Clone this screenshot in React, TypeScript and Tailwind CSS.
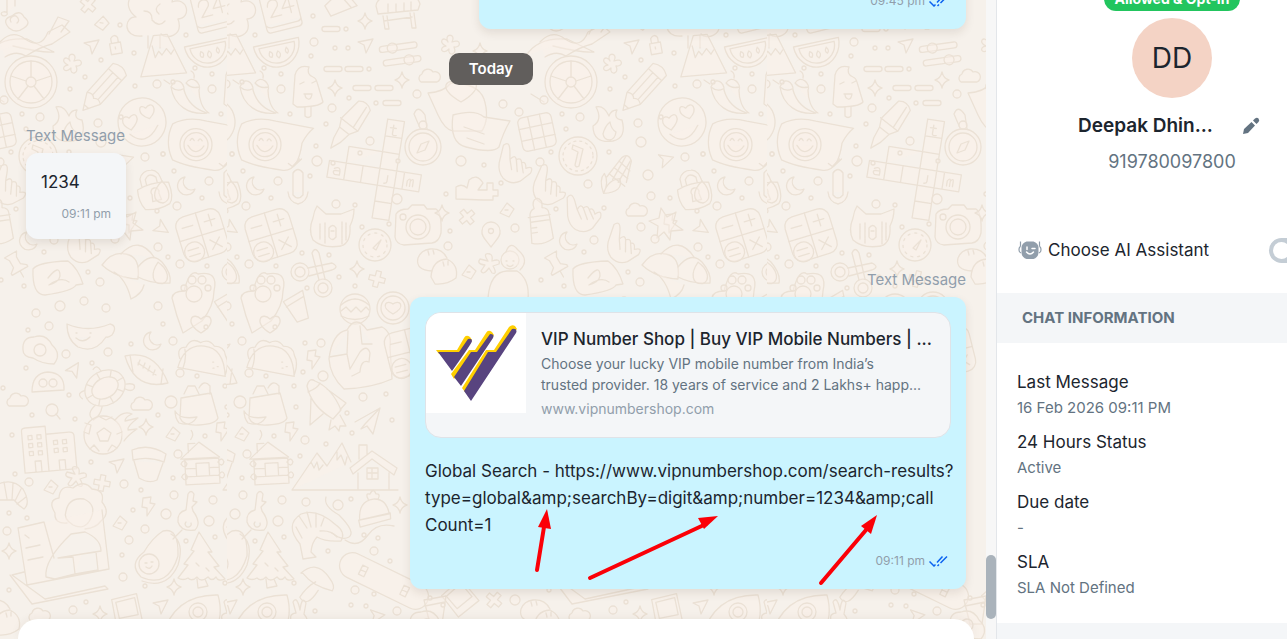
import React from "react";

type Kind = keyof typeof shapes;

const sparkle = "M0-8Q1.500-1.500 7 0Q1.500 1.500 0 8Q-1.500 1.500-7 0Q-1.500-1.500 0-8Z";

const shapes = {
  sparkle: <path d={sparkle} />,
  plus: <path d="M-2.500-8h5v5.500h5.500v5h-5.500v5.500h-5v-5.500H-8v-5h5.500z" />,
  cursor: <path d="M-7-3L8-6L1 8L-1 0Z" />,
  moon: <path d="M-1-9A9 9 0 1 0 9 3A8 8 0 0 1-1-9Z" />,
  bolt: <path d="M-5-8L3-9L2-3L7-2L-1 10L-1 2L-6 1Z" />,
  cloud: <path d="M-8 6A4.500 4.500 0 0 1-7-2A6 6 0 0 1 4-4A5 5 0 0 1 8 6Z" />,
  diamond: <path d="M0-7L7-1L2 7L-7 3Z M-2 0h3" />,
  heart: <path d="M0 8C-18-3-8-14 0-6C8-14 18-3 0 8Z" />,
  flower: (
    <path d="M-2-3C-7-12 7-12 2-3C11-7 12 3 4 2C8 11-3 11-1 4C-8 11-12 2-4 1C-13-3-6-10-2-3Z" />
  ),
  pill: <rect x="-9" y="-2.500" width="18" height="5" rx="2.500" />,
  drop: <path d="M0-11C9-2 9 9 1 11C-10 10-10-1 0-11Z" />,
  pin: (
    <>
      <path d="M0 12C-5 5-10 1-9-4A9 9 0 0 1 9-4C10 1 5 5 0 12Z" />
      <circle cy="-4" r="2.500" />
    </>
  ),
  calendar: (
    <>
      <path d="M-18-22H18V14Q18 18 14 18H-14Q-18 18-18 14Z M-18 10Q-16 13-13 13H14Q17 13 18 10" />
      <path d="M-12-8Q-11-14-6-14Q0-13-2-7L-11 3H0M10 3V-14L2-3H14" />
    </>
  ),
  melon: (
    <>
      <path d="M-23-10H23A23 25 0 0 1-23-10ZM-18-7H18A18 18 0 0 1-18-7Z" />
      <path d="M-8-2q4 2 1 6q-4-1-1-6M0-1q4 3 0 7q-4-3 0-7M9-3q3 4 0 6q-3-2 0-6" />
    </>
  ),
  peak: <path d="M-23 20L-7-20H7L23 20ZM-9-10L-7 2L-3-4L0 0L5-6L9 0L12-4" />,
  tree: (
    <>
      <path d="M-12 20C-32 22-30 0-18 1C-35-12-20-30-8-20C0-36 22-28 18-14C34-20 38 2 24 3C30 20 12 24 7 18" />
      <path d="M-10-5q8 0 8 8M6-12q-7 5-1 10M-6 20v12M6 20v12M-2 4q7 8 13 1" />
    </>
  ),
  chilli: (
    <path d="M-18-10C-14-22-4-14-5-7C-2 4 5 12 18 16C0 18-15 9-18-10M-3-14C3-23 13-13 10-7C10 2 13 12 20 16M-18-10q6 5 12 2M-3-14q5 6 13 4M5-19q1-5-3-7M-19-13l-6-4" />
  ),
  bubbleFace: (
    <>
      <path d="M-34-20Q-20-28 0-24L38-18Q32-13 27-3Q24 26 9 25Q-20 22-33 16Q-42-2-34-20Z" />
      <circle cx="-10" r="16" />
      <circle cx="-10" r="12" />
      <path d="M-18 1q8 12 16 0M-16-4q2-4 4 0M-8-4q2-4 4 0M14 18l4 3l7-8M20 20l7-7" />
    </>
  ),
  popsicle: (
    <>
      <path d="M-14 17L-12-12Q-9-23 2-20Q-1-13 6-10Q9-9 10-5L16 15Q12 20-10 20Z" />
      <path d="M-2 20v9q3 3 6 0v-9M-7-3l4-2M5-4l4-2M-3 7h8q-1 6-4 5t-3-5" />
    </>
  ),
  bench: (
    <path d="M-22-10Q-21-18-12-19L13-21Q20-19 22-12L20-6L-20-2ZM-15 0l2 13h4l-2-13M12-3l2 15h4l-2-15M-14 5l28-4M-10-12v8M-2-12v8M6-13v8M13-14v8" />
  ),
  pens: (
    <>
      <rect x="-20" y="-9" width="38" height="6" rx="3" />
      <rect x="-18" y="5" width="38" height="6" rx="3" />
      <circle cx="-7" cy="-6" r="5" />
      <circle cx="8" cy="8" r="5" />
    </>
  ),
  marker: (
    <path d="M-7-26Q0-32 8-26L11-2L6 6H-6L-10-2ZM-6 6L-4 18L0 28L4 18L6 6M-11-2H11M3-26L5-3" />
  ),
  crossword: (
    <>
      <path d="M9-50h17v100H9zM9-33h17M9-17h17M9 17h17M9 33h17M-42 0h93v17h-93zM-25 0v-17h34M-25 17V0M-8 17v-17M34 0v17" />
      <path d="M16-45v9q0 2 4 1M13-42h6M18 6v6q0 2-3 2M-36 7q6-3 6 2v4h-5q-3-3 0-4h5M38 13v-5q3-4 3 0v5v-5q3-4 3 0v5" />
    </>
  ),
  mic: <path d="M-5-14q5-7 10 0V8Q0 14-5 8ZM-10 5Q-9 15 0 17Q9 15 10 5" />,
  calculator: (
    <>
      <rect x="-23" y="-23" width="46" height="46" rx="10" />
      <path d="M0-23V23M-23 0H23M-17-12h11M6-12h11M12-18v12M6 7l10 10M16 7L6 17" />
      <circle cx="-12" cy="14" r="10" />
      <path d="M-18 11h11M-18 17h11" />
    </>
  ),
  cat: (
    <>
      <path d="M-19-10Q-18-17-15-22L-6-14H9L22-19Q22-10 18-2Q19 15 9 18Q-9 21-19 12Q-24 2-19-10Z" />
      <path d="M-12-4v15M-7-5v20M10-6v22M14-5v17M-3 0q4-5 7 0v9q-4 5-7 0ZM-1 3h3" />
    </>
  ),
  stopwatch: (
    <>
      <circle r="16" />
      <circle r="12" strokeDasharray="2 5" />
      <path d="M-2 3L6-5L1 5Z" />
    </>
  ),
  scissors: (
    <>
      <circle cx="-12" cy="-3" r="9" />
      <circle cx="-12" cy="-3" r="5" />
      <circle cx="11" cy="13" r="9" />
      <circle cx="11" cy="13" r="5" />
      <path d="M-4-7L20-12Q28-8 20-5L-3 1M7 5L0-22Q3-29 7-22L13 4" />
    </>
  ),
  paw: (
    <>
      <path d="M-11 32Q-18 14-22-3Q-21-10-10-10Q-4-33 4-27Q25-31 20-10Q20 5 8 20Q0 25-11 32Z" />
      <circle cy="-7" r="8" />
      <circle cx="-10" cy="-13" r="3" />
      <circle cx="-2" cy="-21" r="4" />
      <circle cx="8" cy="-21" r="4" />
      <circle cx="14" cy="-13" r="3" />
    </>
  ),
  cup: <path d="M-12-10L10-14L6 14H-6ZM-11-4L9-8" />,
  burger: (
    <>
      <circle r="15" />
      <path d="M-14-4Q0-16 14-4M-14 2l5-4l5 5l5-5l5 5l5-5l3 3M-14 7Q0 14 14 7" />
    </>
  ),
  badge: (
    <>
      <circle r="16" />
      <circle r="12" />
      <path d="M0 6C-14-2-6-9 0-4C6-9 14-2 0 6Z" />
    </>
  ),
  camera: (
    <>
      <path d="M-22-13Q-19-18-10-18L-6-22H6L9-18H18Q24-14 23 6Q21 15 14 16L-14 18Q-22 17-23 10Z" />
      <circle r="12" />
      <circle r="8" />
      <circle cx="-15" cy="-10" r="3" />
    </>
  ),
  compass: (
    <>
      <circle r="18" />
      <circle r="14" />
      <path d="M-6 6L-2-3L6-6L2 3ZM-3-19L-9-33Q-5-43 2-32L4-18" />
      <circle cx="0" cy="-22" r="4" />
    </>
  ),
  heartBubble: (
    <>
      <path d="M-30-12Q-14-13-7-22Q20-22 26-6Q32 13 24 26H-5Q-13 25-20 10Z" />
      <path d="M3-3C-24-18-9-29 2-21C16-31 30-18 3-3Z" />
    </>
  ),
  textBubble: (
    <path d="M-27-18Q-5-24 4-16L30-12Q23 0 19 14Q13 21-14 14Q-31 10-27-18ZM-16-6l20 7M-13 5l17 6" />
  ),
  chocolate: (
    <>
      <rect x="-17" y="-17" width="34" height="34" rx="5" />
      <path d="M-6-17V17M6-17V17M-17-6H17M-17 6H17" />
    </>
  ),
  flame: (
    <path d="M-13-17Q-5-19 0-8Q2-14 8-14Q4-5 13-4Q18 14 4 17Q-16 20-16 2Q-6-4-13-17ZM-6 10Q-4 2 1-2Q2 5 7 8Q6 15 1 16Q-5 16-6 10" />
  ),
  clock: (
    <>
      <circle r="19" />
      <circle r="15" strokeDasharray="2 4" />
      <path d="M-5-11L5-7L1 10Q-2 12-3 9L0-4L-6-7Z" />
    </>
  ),
  corn: (
    <>
      <path d="M-10 18Q-17 5-12-2Q-6 6-10 18Q-8 4 4 1Q10 14-10 18M-9 1L3-20Q9-26 13-18L11 4" />
      <path d="M-7-2L10 8M-3-9L12 0M1-16L13-8M7-22L-3 3M12-18L3 5" />
    </>
  ),
  hand: (
    <path d="M-14 5L-16-13Q-12-20-8-10L-5-2Q-2-9 1-4Q5-8 7-3Q11-6 13 1Q20-5 19 4L12 15Q5 22-5 18Q-12 14-14 5M-5-2L0 7M1-4L6 7M7-3L12 6" />
  ),
  heartFace: (
    <>
      <circle r="24" />
      <path d="M-12 6C-24-2-18-12-12-6C-6-13 2-5-12 6ZM8-2C-5-9 0-20 6-13C13-20 19-10 8-2ZM-14 10Q0 26 15 6" />
    </>
  ),
  pencil: (
    <path d="M-9-25Q0-31 9-25V14L0 30L-9 14ZM-9-18H9M-9 14Q-4 10 0 14Q4 10 9 14M-3-18V12M4-18V12M-3 25H3" />
  ),
  wheel: (
    <>
      <circle r="26" />
      <circle r="21" />
      <circle r="5" />
      <path d="M0-5V-21M5-1L20-6M3 4L13 17M-3 4L-13 17M-5-1L-20-6" />
      <path d="M-45-26Q-34-45-4-43L23-30Q10-29-18-36M-40 12L-27 20" />
      <circle cx="-27" cy="18" r="4" />
    </>
  ),
  dumbbell: (
    <path d="M-19 10V-1Q-13-5-8 0L-6-8Q2-15 8-5L3 2H12V-5H18V2H23V8H18V12H8L-19 11Z" />
  ),
  bottle: (
    <path d="M-11 20L-9-8Q-8-13-4-14Q-6-22 0-24Q6-22 4-14Q10-13 10-8L11 18Q0 24-11 20ZM-11-6H11M-9-1H10M-9 5h5M-9 10h5" />
  ),
  buns: (
    <>
      <path d="M-5 4Q-22 3-19-9Q-16-17-7-18Q5-19 10-9" />
      <path d="M-6 10Q-5-7 10-8Q22-2 19 11Q10 18-2 17ZM6-5l1 4M11-6v4M-9-16l1 4M-4-17l1 4" />
    </>
  ),
  person: (
    <>
      <circle cy="-10" r="9" />
      <path d="M-4-18Q0-30 8-20Q20-10 10 0M-22 28Q-20 2-3 1H7Q20 9 18 30M-4-9h1M3-9h1M-3-5q3 3 6 0" />
    </>
  ),
  pushpin: <path d="M-7-11H7L4-6V2L9 6V8H-9V6L-4 2V-6ZM0 8V15" />,
  noteBubble: (
    <path d="M-24-9Q-19-16 11-17Q21-10 26 6L19 7Q16 13-12 17Q-25 17-24-9ZM-9 0Q3-15 3-2Q2 4-8 7Q4-2 12 4" />
  ),
  hats: (
    <>
      <path d="M-34-2Q-24-16-10-13Q5-10 2 12Q-20 11-34-2Z" />
      <path d="M-15-13Q3-32 18-10M2 0Q15-16 26-5Q36 7 34 16Q15 17 2 10M-22 5Q-10 12-5 32Q6 27 8 18" />
    </>
  ),
  smallLock: <path d="M-5-3H6V8H-5ZM-3-3V-8Q1-13 4-8V-3M0 1v2" />,
  lock: (
    <>
      <path d="M-16-4Q0-9 16-4Q18 12 12 17Q0 21-13 17Q-18 8-16-4ZM-11-6V-14Q-7-22 2-20Q9-19 10-6M-6-7V-12Q-1-19 5-12V-7" />
      <path d="M-3 4A4 4 0 1 1 4 4L5 11H-4Z" />
    </>
  ),
  mug: (
    <path d="M-21-12Q0-3 22-12Q30-10 24-1Q20 2 18 1Q7 18-10 11Q-21 4-21-12ZM-12 2q7 6 14-1M-12-3h1M2-3h1" />
  ),
  egg: (
    <>
      <path d="M-17 0Q-18-13-6-13Q6-17 12-5Q22 4 14 14Q2 14-7 8Q-17 7-17 0Z" />
      <circle r="6" />
    </>
  ),
  football: (
    <path d="M-22-13Q8-20 21 14Q-12 22-22-13ZM-17-14L-14 3M16 0L14 15M-9-6L9 6M-7-9l-2 5M-2-6l-2 5M3-3L1 2M8 1L6 6" />
  ),
  turtle: (
    <>
      <ellipse rx="21" ry="17" />
      <ellipse rx="14" ry="10" />
      <path d="M-14 0L-21 0M14 0L21 0M0-10V-17M0 10V17M-10-7L-14-12M10-7L14-12M-10 7L-14 12M10 7L14 12M-19-8q-9-2-6 6M-17 10q-13 3-9 12q8 0 14-7M5-17q0-8-6-5M20 7q10 4 5 8q-4 2-8-4" />
    </>
  ),
  eyes: (
    <>
      <path d="M-16 9Q-16-10 0-11Q17-10 16 7Z" />
      <circle cx="-5" r="4" />
      <circle cx="5" r="4" />
    </>
  ),
  magnifier: (
    <>
      <circle r="6" />
      <path d="M4 4L8 9" />
    </>
  ),
  taco: (
    <path d="M-24 12Q-20-12 0-12Q20-12 24 16ZM-23 3Q-28-8-18-9Q-14-20-4-15Q4-20 10-13Q20-14 22-5Q27 2 24 14M-19 13Q-16 2-19-7M10 3h1M15 7h1M11 9h1" />
  ),
  daypack: (
    <path d="M-18-8L12-13L19 12Q17 18 0 19Q-16 20-19 12ZM-15-12L-11-20H-4L0-12M0-18Q5-27 11-20V-12M-24 5Q-19 14-2 11Q-8 21-20 17Q-24 12-24 5" />
  ),
  rocket: (
    <>
      <path d="M-9-24Q-15-28-17-19Q-13 1 9 14L17 5Q8-17-9-24ZM-13-7L-14 20L-1 9M3-16L22-2L16 5M7 15l-2 10l6-4l4 5l1-5l6 0l-6-11" />
      <path d="M-16-13Q-6-17-4-22" />
    </>
  ),
  plane: <path d="M-13 2L12-12L5 14L-1 6L-7 9L-3 4L12-12" />,
  soccer: (
    <>
      <circle r="19" />
      <path d="M-6-2L1-7L8-2L5 6H-3ZM-19-3l5 2l2-9l-6-2M-3-18l6 3l6-3M19-3l-5 2M14 13l-5-3l-4 6M-13 14l4-4l5 6M12-15Q20-25 29-21Q22-18 22-14L35-17Q24-9 25-5L34-6Q25 0 21 6" />
    </>
  ),
  buildings: (
    <>
      <path d="M-26 23V-19Q-26-22-22-22H-2V23ZM-2-14H21Q26-14 26-10V23H-2M-15 23V12H-9V23M9 23V13H15V23" />
      <path d="M-20-14h4v4h-4zM-11-14h4v4h-4zM-20-6h4v4h-4zM-11-6h4v4h-4zM-20 2h4v4h-4zM-11 2h4v4h-4zM5-7h4v4H5zM14-7h4v4h-4zM5 1h4v4H5zM14 1h4v4h-4z" />
    </>
  ),
  pot: <path d="M-17-13Q0-20 17-9L15-1Q0-7-16-3ZM-15-2L-10 15Q0 21 8 17L14 0" />,
  cabin: (
    <path d="M-21-6L-2-22L18-6ZM-17-5H17V20H-17ZM-6-1H7V12H-6ZM-17 4H-6M-17 12H-6M7 4H17M7 12H17M-13-12V-21H-6M-10-25q4-5 1-9M-21-1q3-6 6 0q-2 6-6 0M16-1q4-6 6 0q-2 6-6 0M-21 12q3-6 6 0q-2 6-6 0M16 12q4-6 6 0q-2 6-6 0" />
  ),
  range: (
    <path d="M-53 23L-28-14L-18-1L-3-24L6-5M-53 23H53M-34-5l3 6l3-6l2 8l4-5M-8-15l0 8l4-5l4 10l2-8M5 1L27-16L52 1L49 8L27-8L8 7ZM13 6V22M44 6V22M22 1h11v11H22zM22 6h11M27 1v11M14-8V-22H22V-12" />
  ),
  flower5: <path d="M-1-3Q-7-12 1-10Q4-9 3-3Q12-6 10 0L4 2Q9 11 3 9L0 4Q-6 12-8 7L-4 1Q-13 0-9-5Z" />,
  croissant: (
    <path d="M-16-12Q0-20 11-8Q19 6 12 12Q7 9 2 3H-13M-8-15L-5 2M1-14L0 3M9-8L3 4M14 0L5 7" />
  ),
  desk: (
    <>
      <path d="M-9-43Q-22-42-21-53Q-29-66-17-68Q-16-82-3-78Q8-87 16-77Q29-76 26-64Q35-53 25-45Q20-38 9-37M-10-55Q-7-69 8-67Q21-61 15-48Q9-35-3-41Q-13-47-10-55Z" />
      <path d="M-58-38L-32-44M-58-38L-49 19L33 3L26-56M-32-44L-22-8M-66 9L-44 38L32 23L29 20L-31 33L-64 9L-52 6M-30 11Q-32-6-5-32L9-34Q25-27 25-15L6-12L-18-8L-3-9L-1 8L-21 13ZM6-12L20-14L22 4L-1 8M-50-18l14-3M-48-6l15-3M-51-31l4 3" />
    </>
  ),
  key: <path d="M-10 3Q-11-7-2-9L0-25Q3-30 6-25L5-18L9-17L4-12L5-8Q14 4 7 11Q-7 13-10 3ZM-2 3a3 3 0 1 0 5 1M-6 11L-15 20" />,
  avocado: (
    <>
      <path d="M9-25Q25-29 24 0Q14 33-13 21Q-26 8-10-4Q-2-18 9-25ZM17-22Q31-14 24 9Q13 34-12 25" />
      <circle cx="-5" cy="8" r="10" />
      <path d="M-9 7h2M-3 6h2M-8 11q4 3 6-1" />
    </>
  ),
  pine: (
    <path d="M-2-28L11-8H7L18 6L13 7L24 19Q17 22 15 17Q11 22 7 17Q0 23-4 17Q-9 22-13 18Q-18 21-23 18L-13 5L-17 4L-7-9L-10-10ZM-4 19L-3 28L7 26L4 19M-5 3l3 3M5 8l3 3" />
  ),
  shrimp: (
    <path d="M25 9Q9 10 1 5Q-4 10-5 20L0 25L-13 27L-16 12Q-32-7-15-18Q1-24 20-7Q30 0 25 9ZM-14 6L-20-5M-9-4L-17-16M-5-5L-9-20M0-5V-19M5-6L8-14M4-1Q15-2 21 5" />
  ),
  beanie: <path d="M-15 9Q-15-10 0-11Q13-11 15 5ZM-16 9L16 4V10L-15 16ZM-5-11q-3-7 2-5q4-7 6 0q5 0 2 5" />,
  worm: <path d="M-33-30Q-36-21-20-12Q-3 5-10 10Q-17 14-27 6M-14 13Q-1 22 9 8Q18-5 35-1" fill="none" />,
  skateboard: (
    <>
      <rect x="-48" y="-13" width="96" height="26" rx="13" />
      <path d="M-26-5h6v10h-6zM20-5h6v10h-6zM-26 0h6M20 0h6" />
    </>
  ),
  mushroom: <path d="M-17-4Q-4-20 11-5Q20 3 17 8Q-3 7-15-4ZM-1 2Q-9 8-14 20Q-5 30 3 10" />,
  capsule: (
    <>
      <path d="M-32 23Q-20-20 24-19Q30 2 20 19L-10 27M-32 23l8-10l-6-2" />
      <circle cx="4" cy="-2" r="9" />
      <circle cx="4" cy="-2" r="5" />
    </>
  ),
  bunny: <path d="M-7 10Q-13 0-4-1L-7-12Q-3-19 0-4Q2-19 6-11L4 0Q10 7 6 14" />,
  monitor: <path d="M-15-9L10-14L15 14L-11 18ZM-11-6L8-10L11 7L-8 10Z" />,
  satchel: (
    <path d="M-23 5Q-20-21-5-24Q4-40 15-24L30-27Q40-22 38-7L40 25Q20 34-8 35Q-22 22-23 5ZM-23 3L-5 0L-4-23M-5 0L-2 15L8-2Q15-10 18-1L17 8Q9 5 8 18L0 22M8-28L10-10H20" />
  ),
  burst: <path d="M-10 12L-9 0L-18-5L-8-8L-6-18L0-9L9-14L6-3L16 4L4 5L3 14L-3 6Z" />,
  music: <path d="M-2 5V-9L6-11V-2M-2 5a3 2 0 1 1-4-1a3 2 0 0 1 4 1" />,
  landscape: (
    <path d="M-40 10Q-28-3-15 7Q1 18 8 0L22-7L30 0L12 12Q0 15-14 24Q-24 18-35 25M-31-4q-8-9 3-12q8-7 12 1q8 6 0 11q-8 6-15 0M-29-10a4 4 0 1 1 6 1M9 2l9-17l11 4l-8 11" />
  ),
};

const doodles: [Kind, number, number, number?][] = [
  ["calendar", 281, 12, -14], ["melon", 278, 52, -12], ["peak", 231, 55, -5], ["tree", 694, 16],
  ["chilli", 258, 97], ["bubbleFace", 275, 145, 2], ["popsicle", 307, 87], ["bench", 398, 16],
  ["pens", 400, 53, -8], ["marker", 348, 126, 38], ["crossword", 371, 167, 9], ["cup", 340, 4, 60],
  ["moon", 255, 186], ["lock", 694, 190, -14], ["drop", 231, 192], ["mic", 298, 187], ["calculator", 271, 235, -17],
  ["cat", 332, 228], ["stopwatch", 375, 245], ["scissors", 312, 275], ["sparkle", 357, 269], ["plus", 377, 279, 15],
  ["drop", 229, 273, -10], ["paw", 263, 301], ["cup", 298, 307, -20], ["burger", 355, 309], ["badge", 393, 308],
  ["camera", 418, 227], ["compass", 423, 147], ["heartBubble", 458, 105], ["textBubble", 480, 133],
  ["chocolate", 537, 132, -12], ["flame", 609, 124], ["clock", 578, 156], ["corn", 616, 177, 8],
  ["hand", 514, 163, 20], ["hand", 549, 185, 30], ["hand", 582, 212, 5], ["hand", 623, 243, 25],
  ["heartFace", 682, 122, -10], ["pencil", 643, 88, 42], ["wheel", 571, 82], ["landscape", 580, 32],
  ["dumbbell", 475, 188], ["plus", 467, 217, 50], ["bottle", 540, 222, -8], ["pin", 491, 235], ["moon", 568, 241],
  ["buns", 437, 267], ["sparkle", 442, 213], ["person", 510, 270], ["pushpin", 556, 264, -30], ["noteBubble", 597, 278],
  ["hats", 676, 267], ["cloud", 636, 210], ["bolt", 670, 223], ["cursor", 700, 227, 70], ["cursor", 664, 160, 20],
  ["flower", 612, 64], ["smallLock", 655, 46, -10], ["cursor", 631, 46], ["music", 549, 8], ["plus", 628, 5, 40],
  ["diamond", 642, 23, 10], ["sparkle", 365, 21], ["sparkle", 335, 88], ["sparkle", 402, 80], ["cursor", 365, 45],
  ["pill", 331, 29], ["pill", 333, 69], ["pill", 354, 69], ["pill", 362, 88], ["pill", 384, 88], ["pill", 392, 103],
  ["cloud", 429, 76], ["sparkle", 480, 51], ["flower", 450, 45], ["burst", 667, 226], ["diamond", 507, 210],
  ["sparkle", 400, 505], ["flower5", 489, 264], ["diamond", 469, 272], ["satchel", 352, 354], ["calculator", 410, 352, -14],
  ["mug", 628, 336], ["egg", 580, 350], ["cursor", 613, 371, -20], ["moon", 692, 341], ["football", 687, 369],
  ["turtle", 645, 388, -30], ["eyes", 588, 383], ["cloud", 557, 400], ["cloud", 681, 404], ["magnifier", 592, 410],
  ["taco", 272, 358, 6], ["bolt", 313, 359], ["daypack", 268, 406], ["rocket", 324, 405], ["plane", 368, 420],
  ["sparkle", 686, 427], ["soccer", 643, 435], ["buildings", 589, 448, -5], ["pot", 689, 463], ["cabin", 271, 464, -3],
  ["diamond", 242, 434], ["bolt", 291, 431], ["range", 345, 467], ["cursor", 656, 465], ["flower5", 616, 477],
  ["plus", 642, 483, 10], ["diamond", 591, 487], ["croissant", 552, 497], ["desk", 616, 566], ["key", 257, 519],
  ["avocado", 694, 556], ["pine", 270, 560], ["shrimp", 316, 532], ["beanie", 374, 510, -4], ["worm", 359, 527],
  ["sparkle", 549, 551], ["skateboard", 384, 581, 26], ["mushroom", 317, 580, 10], ["capsule", 263, 614],
  ["bunny", 300, 614], ["monitor", 667, 608, -2], ["bolt", 688, 506], ["sparkle", 243, 587], ["sparkle", 640, 614],
  ["diamond", 660, 523], ["cursor", 229, 606], ["monitor", 459, 596, -30], ["plus", 494, 600, 40], ["cup", 436, 610],
  ["buns", 540, 618], ["cloud", 579, 615], ["egg", 427, 625], ["heart", 270, 325], ["cursor", 375, 616, 30],
];

const dots: [number, number, number][] = [
  [660, 25, 2], [674, 53, 2], [641, 60, 2], [625, 77, 2], [610, 89, 2], [675, 86, 2], [697, 84, 4], [242, 82, 2],
  [255, 35, 2], [314, 42, 4], [311, 56, 2], [264, 68, 2], [281, 74, 2], [281, 89, 4], [313, 16, 2], [346, 29, 2],
  [335, 48, 2], [348, 48, 2], [369, 69, 2], [349, 98, 2], [376, 103, 2], [332, 108, 4], [290, 114, 2], [326, 124, 2],
  [417, 94, 4], [503, 104, 4], [519, 112, 4], [562, 114, 2], [580, 117, 4], [638, 123, 4], [661, 117, 2], [566, 129, 2],
  [370, 141, 4], [316, 146, 2], [317, 161, 5], [333, 163, 2], [360, 153, 2], [398, 161, 2], [232, 154, 2], [310, 176, 2],
  [461, 161, 5], [484, 165, 2], [540, 162, 4], [551, 152, 2], [609, 152, 2], [641, 142, 5], [685, 157, 4], [703, 154, 2],
  [648, 175, 5], [588, 184, 4], [501, 183, 2], [446, 194, 2], [278, 181, 4], [243, 171, 2], [271, 198, 2], [246, 206, 4],
  [336, 204, 4], [355, 205, 2], [397, 199, 5], [651, 196, 4], [670, 198, 2], [697, 211, 2], [362, 227, 2], [389, 224, 2],
  [604, 208, 2], [556, 209, 2], [515, 228, 4], [450, 231, 2], [448, 246, 4], [594, 240, 4], [584, 252, 2], [641, 227, 4],
  [655, 239, 4], [698, 247, 4], [237, 257, 2], [249, 264, 4], [302, 253, 2], [329, 255, 2], [339, 277, 2], [276, 266, 2],
  [307, 288, 2], [355, 286, 2], [640, 282, 4], [628, 272, 2], [624, 301, 4], [600, 306, 5], [646, 308, 4], [576, 313, 4],
  [541, 280, 2], [564, 286, 2], [698, 306, 4], [589, 326, 4], [568, 330, 2], [703, 324, 2], [242, 341, 4], [275, 327, 2],
  [305, 343, 2], [321, 343, 4], [606, 354, 4], [566, 368, 2], [648, 352, 4], [632, 363, 2], [671, 344, 2], [323, 376, 5],
  [303, 372, 2], [249, 373, 4], [266, 376, 2], [543, 388, 2], [609, 395, 2], [294, 386, 2], [240, 402, 6], [363, 397, 4],
  [386, 394, 2], [296, 407, 2], [347, 413, 2], [392, 420, 2], [572, 415, 2], [615, 419, 2], [698, 415, 2], [352, 433, 2],
  [552, 435, 2], [274, 436, 2], [305, 440, 4], [326, 444, 2], [247, 454, 4], [300, 456, 2], [555, 474, 2], [631, 462, 2],
  [569, 482, 4], [664, 484, 4], [681, 490, 2], [242, 478, 2], [243, 495, 4], [282, 500, 4], [306, 502, 4], [338, 505, 5],
  [351, 499, 2], [549, 513, 2], [567, 518, 2], [673, 510, 2], [235, 514, 5], [278, 521, 5], [547, 531, 4], [685, 529, 4],
  [669, 540, 4], [364, 535, 2], [378, 538, 2], [255, 541, 2], [284, 537, 2], [662, 555, 2], [328, 551, 2], [374, 551, 4],
  [390, 561, 2], [663, 577, 4], [685, 586, 2], [549, 590, 2], [613, 610, 4], [626, 602, 2], [294, 583, 2], [355, 590, 4],
  [374, 594, 2], [351, 605, 2], [366, 606, 2], [397, 611, 4], [315, 611, 2], [515, 600, 5], [430, 598, 2], [443, 605, 2],
];

function Wallpaper() {
  return (
    <svg aria-hidden="true" className="absolute inset-0 h-full w-full bg-[#f6f1eb]">
      <defs>
        <g id="motif">
          {doodles.map(([kind, x, y, turn = 0], i) => (
            <g key={i} transform={`translate(${x} ${y}) rotate(${turn})`}>
              {shapes[kind]}
            </g>
          ))}
          {dots.map(([x, y, r], i) => (
            <circle key={i} cx={x} cy={y} r={r} />
          ))}
        </g>
        <pattern id="doodles" x="227" y="0" width="540" height="960" patternUnits="userSpaceOnUse">
          <g
            transform="translate(-227 0)"
            fill="#f9efe9"
            fillOpacity="0.400"
            stroke="#ebe1d5"
            strokeWidth="1.300"
            strokeLinejoin="round"
            strokeLinecap="round"
          >
            <use href="#motif" x="-471" />
            <use href="#motif" />
            <use href="#motif" x="471" />
          </g>
        </pattern>
      </defs>
      <rect width="100%" height="100%" fill="url(#doodles)" />
    </svg>
  );
}

function Stamp({ time, read = false }: { time: string; read?: boolean }) {
  return (
    <p className="flex items-center justify-end gap-1 text-[12px] leading-5 text-[#919eab]">
      {time}
      {read && (
        <svg role="img" aria-label="Read" viewBox="0 0 22 12" className="h-3 w-[22px]" fill="none" stroke="#0b62f0" strokeWidth="1.500">
          <path d="M0.500 6.500L5 11L6.500 9.500M8 7.500L13.500 1.500M8.500 11L10 9.500M11.500 8L18 1.500" />
        </svg>
      )}
    </p>
  );
}

function Arrow({ d, head }: { d: string; head: string }) {
  return (
    <>
      <path d={d} stroke="#fb0007" strokeWidth="4" strokeLinecap="round" />
      <path d={head} fill="#fb0007" />
    </>
  );
}

function LinkPreview() {
  return (
    <a href="#preview" className="flex overflow-hidden rounded-2xl border border-[#dfe3e8] bg-[#f4f6f8]">
      <span className="h-[100px] w-[100px] shrink-0 bg-white">
        <svg role="img" aria-label="VIP Number Shop" viewBox="0 0 100 100" className="h-full w-full">
          <g fill="#ffcf00">
            <path d="M10 37H31L38 25Q40 21 44 24L46 27L33 41H13Z" />
            <path d="M25 61L43 37H49L60 20Q62 16 66 19L68 22L50 42L28 66Z" />
            <path d="M36 75L60 37H68L83 14Q86 11 89 13L91 16L70 42L39 79Z" />
          </g>
          <g fill="#58447f">
            <path d="M12 39H33L42 26Q46 25 46 28Q46 30 26 58Z" />
            <path d="M28 64L45 39H51L64 21Q69 21 67 25L35 73Z" />
            <path d="M38 78L62 39H70L86 16Q92 15 90 20L45 88Z" />
          </g>
        </svg>
      </span>
      <span className="block min-w-0 flex-1 px-[15px] pt-3 pb-[18px]">
        <strong className="block text-[17px] leading-7 font-medium whitespace-nowrap text-[#1c252e]">
          VIP Number Shop | Buy VIP Mobile Numbers | ...
        </strong>
        <span className="block text-[14px] leading-[21px] whitespace-nowrap text-[#637381]">
          Choose your lucky VIP mobile number from India’s
          <br />
          trusted provider. 18 years of service and 2 Lakhs+ happ...
        </span>
        <span className="mt-1 block text-[14px] leading-5 text-[#919eab]">www.vipnumbershop.com</span>
      </span>
    </a>
  );
}

function Chat() {
  return (
    <main className="relative flex min-w-0 flex-1 flex-col">
      <Wallpaper />
      <section aria-label="Messages" className="relative flex min-h-0 flex-1 flex-col justify-end overflow-hidden pr-5 pb-[30px] pl-4">
        <article className="w-[487px] shrink-0 self-end rounded-xl bg-[#caf4ff] px-[15px] pt-10 pb-[18px] shadow-[0_4px_10px_rgba(60,40,20,0.1)]">
          <Stamp time="09:45 pm" read />
        </article>
        <p className="mt-6 self-center rounded-[10px] bg-[#615e5c] px-5 py-1 text-[15px] leading-6 font-semibold text-white">
          Today
        </p>
        <div className="mt-10 ml-2.5 self-start">
          <p className="text-[15px] leading-[22px] text-[#919eab]">Text Message</p>
          <article className="mt-1.5 w-[100px] rounded-xl bg-[#f4f6f8] px-[15px] pt-[15px] pb-[15px] shadow-[0_4px_10px_rgba(60,40,20,0.1)]">
            <p className="text-[17px] leading-7 text-[#1c252e]">1234</p>
            <div className="mt-2">
              <Stamp time="09:11 pm" />
            </div>
          </article>
        </div>
        <p className="mt-[30px] self-end text-[15px] leading-[22px] text-[#919eab]">Text Message</p>
        <article className="relative mt-1.5 w-[556px] shrink-0 self-end rounded-xl bg-[#caf4ff] px-[15px] pt-[15px] pb-[18px] shadow-[0_4px_10px_rgba(60,40,20,0.1)]">
          <LinkPreview />
          <p className="mt-5 text-[17px] leading-[27px] whitespace-nowrap text-[#1c252e]">
            Global Search - https://www.vipnumbershop.com/search-results?
            <br />
            type=global&amp;amp;searchBy=digit&amp;amp;number=1234&amp;amp;call
            <br />
            Count=1
          </p>
          <div className="mt-3">
            <Stamp time="09:11 pm" read />
          </div>
          <svg aria-hidden="true" viewBox="0 0 556 292" className="pointer-events-none absolute inset-0 h-full w-full" fill="none">
            <Arrow d="M127 273L134 230" head="M137 212L141 232L128 230Z" />
            <Arrow d="M180 281L296 227" head="M308 219L294 232L288 221Z" />
            <Arrow d="M411 286L456 233" head="M467 218L461 237L451 229Z" />
          </svg>
        </article>
      </section>
      <footer className="relative mr-3 ml-[18px] h-5 shrink-0 rounded-t-3xl bg-white shadow-[0_-2px_10px_rgba(60,40,20,0.05)]" />
    </main>
  );
}

const facts = [
  ["Last Message", "16 Feb 2026 09:11 PM"],
  ["24 Hours Status", "Active"],
  ["Due date", "-"],
  ["SLA", "SLA Not Defined"],
];

function Details() {
  return (
    <aside className="w-[291px] shrink-0 overflow-hidden border-l border-[#e3e6ea] bg-white">
      <div className="flex w-[350px] flex-col">
        <div className="flex h-[293px] flex-col items-center">
          <span className="-mt-[13px] rounded-full bg-[#22c55e] px-2.5 text-[14px] leading-6 font-bold text-white">
            Allowed &amp; Opt-In
          </span>
          <div className="mt-[7px] flex h-20 w-20 items-center justify-center rounded-full bg-[#f4d3c5] text-[28px] text-[#1c252e]">
            DD
          </div>
          <div className="mt-3 flex w-full items-center pr-[87px] pl-[81px] leading-8">
            <h1 className="flex-1 text-[19px] font-semibold whitespace-nowrap text-[#1c252e]">Deepak Dhin...</h1>
            <button type="button" aria-label="Edit name" className="text-[#637381]">
              <svg viewBox="0 0 18 18" className="h-[18px] w-[18px]" fill="currentColor">
                <path d="M1 17L2 12L9.500 5L13 8.500L6 16ZM11 3.500L13 1.500Q15 0 16.500 1.500Q18 3.500 16.500 5L14.500 7Z" />
              </svg>
            </button>
          </div>
          <p className="mt-1.5 text-[18px] leading-7 text-[#637381]">919780097800</p>
          <label className="mt-[60px] flex w-full items-center gap-1.5 pr-9 pl-[21px] text-[17px] leading-7 text-[#1c252e]">
            <svg viewBox="0 0 24 18" className="h-[18px] w-6" fill="#919eab" aria-hidden="true">
              <path d="M8.500 0.500H15.500Q20 2 20.500 6V12Q20 16.500 15.500 18H8.500Q4 16.500 3.500 12V6Q4 2 8.500 0.500Z" />
              <path d="M2.500 0.500V5.500M21.500 0.500V5.500M2.500 5.500Q1 6 1 9Q1 11.500 3 12M21.500 5.500Q23 6 23 9Q23 11.500 21 12" fill="none" stroke="#919eab" strokeWidth="1.200" />
              <path d="M9 6V8.500M14 7.500H17M8.500 11Q12 15 15.500 11" fill="none" stroke="#fff" strokeWidth="1.500" strokeLinecap="round" />
            </svg>
            <span className="flex-1">Choose AI Assistant</span>
            <span className="relative flex h-[25px] w-[42px] items-center rounded-full bg-[#c4cdd5]">
              <input type="checkbox" role="switch" className="absolute inset-0 m-0 h-full w-full opacity-0" />
              <span className="ml-1 h-[17px] w-[17px] rounded-full bg-white" />
            </span>
          </label>
        </div>
        <h2 className="bg-[#f4f6f8] pl-[25px] text-[15px] leading-[50px] font-bold text-[#637381]">CHAT INFORMATION</h2>
        <dl className="flex h-[280px] flex-col gap-2 pt-[26px] pl-5">
          {facts.map(([name, value]) => (
            <div key={name}>
              <dt className="text-[17px] leading-[26px] text-[#1c252e]">{name}</dt>
              <dd className="text-[15px] leading-[26px] text-[#637381]">{value}</dd>
            </div>
          ))}
        </dl>
        <div className="h-[50px] bg-[#f4f6f8]" />
      </div>
    </aside>
  );
}

export default function App() {
  return (
    <div className="flex h-screen overflow-hidden bg-white font-['Inter','Liberation_Sans',sans-serif]">
      <Chat />
      <div className="flex w-2.5 shrink-0 flex-col justify-end bg-[#f7f7f7] pb-5">
        <div className="h-16 rounded-full bg-[#aab3bb]" />
      </div>
      <Details />
    </div>
  );
}
